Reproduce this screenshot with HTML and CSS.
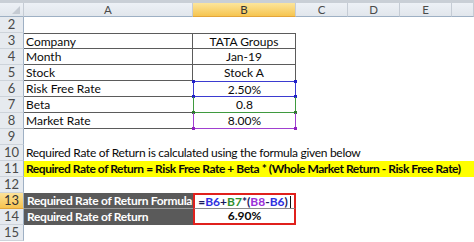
FILE: index.html
```html
<!DOCTYPE html>
<html lang="en">
<head>
    <meta charset="UTF-8">
    <title>Required Rate of Return</title>
    <link rel="stylesheet" href="styles.css">
</head>
<body>
    <!-- strip above the column headers -->
    <div class="topbar"></div>

    <div class="sheet">
        <!-- Column headers -->
        <div class="ch corner"><span class="tri"></span></div>
        <div class="ch">A</div>
        <div class="ch active">B</div>
        <div class="ch">C</div>
        <div class="ch">D</div>
        <div class="ch">E</div>
        <div class="ch"></div>

        <!-- Row 2 -->
        <div class="rh">2</div>
        <div class="cell span6"></div>

        <!-- Rows 3 - 8: input table -->
        <div class="rh">3</div>
        <div class="cell t tt">Company</div>
        <div class="cell t tt b">TATA Groups</div>
        <div class="cell span4"></div>

        <div class="rh">4</div>
        <div class="cell t">Month</div>
        <div class="cell t b">Jan-19</div>
        <div class="cell span4"></div>

        <div class="rh">5</div>
        <div class="cell t">Stock</div>
        <div class="cell t b nobottom">Stock A</div>
        <div class="cell span4"></div>

        <div class="rh">6</div>
        <div class="cell t noright">Risk Free Rate</div>
        <div class="cell ref blue">2.50%</div>
        <div class="cell span4"></div>

        <div class="rh">7</div>
        <div class="cell t noright">Beta</div>
        <div class="cell ref green">0.8</div>
        <div class="cell span4"></div>

        <div class="rh">8</div>
        <div class="cell t noright">Market Rate</div>
        <div class="cell ref purple">8.00%</div>
        <div class="cell span4"></div>

        <div class="rh">9</div>
        <div class="cell span6"></div>

        <!-- Rows 10 - 11: explanation -->
        <div class="rh">10</div>
        <div class="cell span6 tight">Required Rate of Return is calculated using the formula given below</div>

        <div class="rh">11</div>
        <div class="cell span6 yellow">Required Rate of Return = Risk Free Rate + Beta * (Whole Market Return - Risk Free Rate)</div>

        <div class="rh">12</div>
        <div class="cell span6"></div>

        <!-- Rows 13 - 14: result -->
        <div class="rh active">13</div>
        <div class="cell dark dtop">Required Rate of Return Formula</div>
        <div class="cell red rtop"><span class="op">=</span><span class="c-blue">B6</span><span class="op">+</span><span class="c-green">B7</span><span class="op">*(</span><span class="c-purple">B8</span><span class="op">-</span><span class="c-blue">B6</span><span class="op">)</span><span class="caret"></span></div>
        <div class="cell span4"></div>

        <div class="rh">14</div>
        <div class="cell dark">Required Rate of Return</div>
        <div class="cell red rbottom">6.90%</div>
        <div class="cell span4"></div>

        <div class="rh">15</div>
        <div class="cell span6"></div>
    </div>
</body>
</html>
```

FILE: styles.css
```css
body {
    margin: 0;
    padding: 0;
    width: 474px;
    height: 242px;
    overflow: hidden;
    background: #fff;
    font-family: Lato, "Liberation Sans", sans-serif;
    color: #0a0a0a;
}

.topbar {
    height: 3px;
    background: #c9cfd6;
}

/* Grid of the worksheet */
.sheet {
    display: grid;
    grid-template-columns: 24px 169px 103px 52px 52px 52px 22px;
    grid-template-rows: 14px repeat(14, 16px);
}

/* Column headers */
.ch {
    box-sizing: border-box;
    background: linear-gradient(#edf1f6, #e1e6ec);
    border-right: 1px solid #c5ccd5;
    border-bottom: 1px solid #9eb0c4;
    color: #4a4a4a;
    font-size: 11.5px;
    line-height: 13px;
    text-align: center;
}

.ch.active {
    background: linear-gradient(#fce59c, #f6c550);
    border-bottom: 1px solid #e3a53a;
    color: #333;
}

.corner {
    position: relative;
}

.corner .tri {
    position: absolute;
    right: 3px;
    bottom: 2px;
    width: 0;
    height: 0;
    border-left: 8px solid transparent;
    border-bottom: 8px solid #c4cad2;
}

/* Row headers */
.rh {
    box-sizing: border-box;
    background: #e6eaef;
    border-right: 1px solid #9eb0c4;
    border-bottom: 1px solid #cdd3da;
    color: #4a4a4a;
    font-size: 13px;
    line-height: 15px;
    text-align: center;
}

.rh.active {
    background: linear-gradient(#fce29a, #f6c350);
    border-bottom: 1px solid #e3a53a;
    color: #333;
}

/* Cells */
.cell {
    box-sizing: border-box;
    font-size: 12px;
    line-height: 15px;
    padding-left: 2px;
    white-space: nowrap;
    overflow: visible;
    position: relative;
}

.span6 {
    grid-column: span 6;
}

.span4 {
    grid-column: span 4;
}

.tight {
    letter-spacing: -0.3px;
}

/* bordered input table */
.t {
    border-bottom: 1px solid #5b5b5b;
    border-right: 1px solid #5b5b5b;
}

.tt {
    border-top: 1px solid #5b5b5b;
}

.b {
    text-align: center;
    padding-left: 0;
}

.noright {
    border-right: none;
}

.nobottom {
    border-bottom: none;
}

/* formula reference highlights */
.ref {
    text-align: center;
    padding-left: 0;
    border-left: 1px solid;
    border-right: 1px solid;
    border-bottom: 1px solid;
}

.ref::before {
    content: "";
    position: absolute;
    left: -2px;
    top: -2px;
    width: 3px;
    height: 3px;
}

.blue {
    border-color: #3b3bd0;
    border-top: 1px solid #3b3bd0;
}

.blue::before {
    background: #2020c8;
    box-shadow: 102px 0 0 #2020c8, 0 15px 0 #2020c8, 102px 15px 0 #2020c8;
}

.green {
    border-color: #3f9a3f;
}

.green::before {
    top: 14px;
    background: #2e7a2e;
    box-shadow: 102px 0 0 #2e7a2e;
}

.purple {
    border-color: #a040d0;
}

.purple::before {
    top: 14px;
    background: #9020c0;
    box-shadow: 102px 0 0 #9020c0;
}

.yellow {
    background: #ffff00;
    font-weight: bold;
    letter-spacing: -0.45px;
}

/* result block */
.dark {
    background: #5a5a5a;
    color: #fff;
    font-weight: bold;
    padding-left: 3px;
    letter-spacing: -0.3px;
}

.dtop {
    border-bottom: 1px solid #9a9a9a;
}

.red {
    border-left: 2px solid #e0201c;
    border-right: 2px solid #e0201c;
    font-weight: bold;
    text-align: center;
    padding-left: 0;
}

.rtop {
    border-top: 2px solid #e0201c;
    border-bottom: 1px solid #8a8a8a;
    line-height: 13px;
}

.rbottom {
    border-bottom: 2px solid #e0201c;
    line-height: 14px;
}

.op {
    color: #1a1a60;
}

.c-blue {
    color: #2f2fe0;
}

.c-green {
    color: #2f8f2f;
}

.c-purple {
    color: #9a30d8;
}

.caret {
    display: inline-block;
    width: 1px;
    height: 12px;
    background: #111;
    margin-left: 2px;
    vertical-align: -2px;
}
```
